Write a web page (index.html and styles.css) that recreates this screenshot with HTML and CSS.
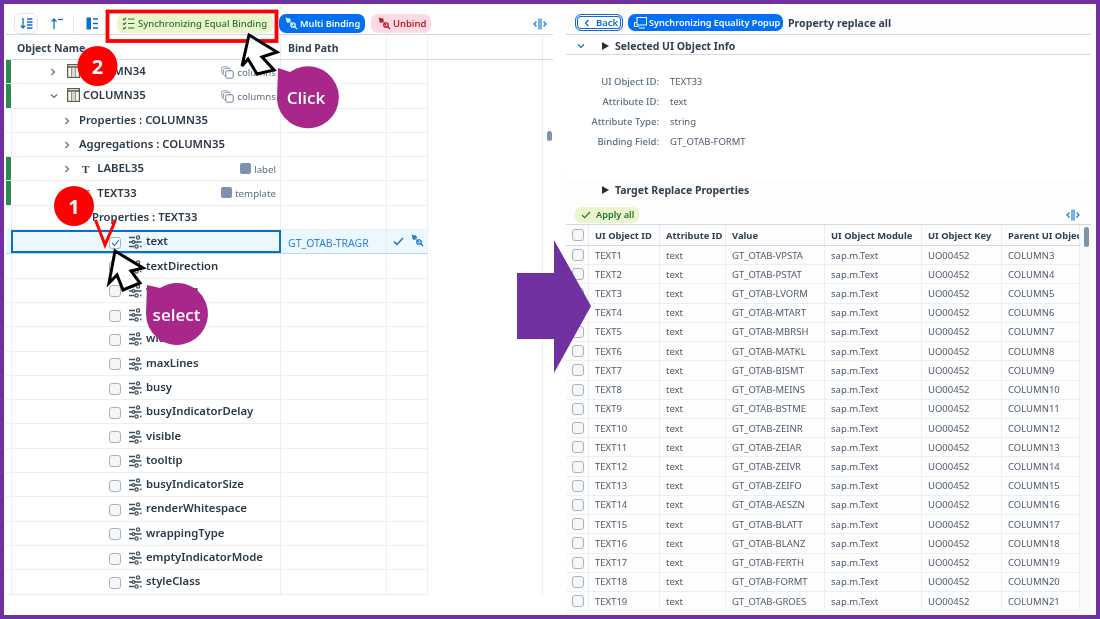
FILE: index.html
```html
<!DOCTYPE html>
<html>
<head lang="en">
    <meta charset="UTF-8">
    <title>Synchronizing Equal Binding</title>
    <link rel="stylesheet" href="styles.css">
</head>
<body>
<svg class="defs" width="0" height="0">
    <symbol id="i-param" viewBox="0 0 14 14">
        <g fill="none" stroke="#3f4f60" stroke-width="1.3">
            <path d="M1 2.5h6M1 7h3M1 11.5h5"/>
            <path d="M7 7h6.5M12 11.5h1.5"/>
            <circle cx="10" cy="2.5" r="1.6"/>
            <circle cx="5.5" cy="7" r="1.4"/>
            <circle cx="8.5" cy="11.5" r="1.6"/>
        </g>
    </symbol>
    <symbol id="i-column" viewBox="0 0 13 14">
        <rect x=".6" y=".6" width="11.8" height="12.8" fill="#fff4dc" stroke="#5a5a5a" stroke-width="1.2"/>
        <path d="M.6 3h11.8" stroke="#5a5a5a" stroke-width="1.6"/>
        <path d="M4.6 3v10M8.4 3v10" stroke="#8b8b8b"/>
        <rect x="5" y="3.8" width="3" height="9" fill="#cfd6de"/>
    </symbol>
    <symbol id="i-copy" viewBox="0 0 13 13">
        <g fill="#fff" stroke="#8fa0b3" stroke-width="1">
            <rect x=".8" y=".8" width="7" height="7" rx="1"/>
            <rect x="2.6" y="2.6" width="7" height="7" rx="1"/>
            <rect x="4.8" y="4.8" width="7.4" height="7.4" rx="1.4" stroke="#6f8196"/>
        </g>
    </symbol>
    <symbol id="i-link" viewBox="0 0 14 14">
        <g fill="none" stroke="currentColor" stroke-width="1.3">
            <path d="M1 1l3 3M6 6l3 3M2.5 5L5 2.5"/>
            <circle cx="3.8" cy="3.8" r="1.8"/>
            <circle cx="8.6" cy="8.6" r="2.4"/>
            <path d="M10.4 10.4L13 13"/>
        </g>
    </symbol>
    <symbol id="i-split" viewBox="0 0 14 12">
        <g fill="none" stroke="#0a6ed1" stroke-width="1.1">
            <path d="M6 .5v11M8 .5v11"/>
            <path d="M3.5 3.5L1 6l2.5 2.5M10.5 3.5L13 6l-2.5 2.5"/>
        </g>
    </symbol>
    <symbol id="i-right" viewBox="0 0 6 8">
        <path d="M1.5 1l3 3-3 3" fill="none" stroke="#556b82" stroke-width="1.1"/>
    </symbol>
    <symbol id="i-down" viewBox="0 0 8 6">
        <path d="M1 1.5l3 3 3-3" fill="none" stroke="#556b82" stroke-width="1.1"/>
    </symbol>
</svg>

<div class="frame">
    <div class="pane-left">
        <div class="tools">
            <span class="tool-box">
                <svg width="13" height="13" viewBox="0 0 13 13"><g fill="none" stroke="#0a6ed1" stroke-width="1.3"><path d="M3 1v10M.8 8.6L3 11l2.2-2.4"/><path d="M7 2h5.5M7 5h5.5M7 8h5.5M7 11h5.5"/></g></svg>
            </span>
            <svg class="tool-up" width="14" height="13" viewBox="0 0 14 13"><g fill="none" stroke="#0a6ed1" stroke-width="1.3"><path d="M4 12V2M1.5 4.6L4 2l2.5 2.6"/><path d="M8 2.5h5"/></g></svg>
            <span class="tool-sep"></span>
            <svg class="tool-tree" width="12" height="13" viewBox="0 0 12 13"><rect x=".5" y=".5" width="4.5" height="12" fill="#0a6ed1"/><path d="M7 2h5M7 6.5h5M7 11h5" stroke="#0a6ed1" stroke-width="1.4"/></svg>
            <span class="btn btn-green">
                <svg width="13" height="13" viewBox="0 0 13 13"><g fill="none" stroke="#256f3a" stroke-width="1.1"><path d="M1 2l1 1 2-2M1 6.5l1 1 2-2M1 11l1 1 2-2"/><path d="M6 2h6.5M6 6.5h6.5M6 11h6.5"/></g></svg>
                Synchronizing Equal Binding
            </span>
            <span class="btn btn-blue"><svg width="13" height="13"><use href="#i-link"/></svg>Multi Binding</span>
            <span class="btn btn-pink"><svg width="13" height="13"><use href="#i-link"/></svg>Unbind</span>
            <svg class="tool-split" width="14" height="12"><use href="#i-split"/></svg>
        </div>

        <div class="tree-head">
            <div class="head-cell head-name">Object Name</div>
            <div class="head-cell head-path">Bind Path</div>
            <div class="head-cell head-act"></div>
            <div class="head-cell head-fill"></div>
        </div>

        <div class="tree-body">
            <div class="rows">
                <div class="row mark"><div class="cell-name lv1"><svg class="chev" width="6" height="8"><use href="#i-right"/></svg><svg class="obj" width="13" height="14"><use href="#i-column"/></svg><b>COLUMN34</b><span class="tag"><svg width="13" height="13"><use href="#i-copy"/></svg>columns</span></div><div></div><div></div></div>
                <div class="row mark"><div class="cell-name lv1"><svg class="chev chev-d" width="8" height="6"><use href="#i-down"/></svg><svg class="obj" width="13" height="14"><use href="#i-column"/></svg><b>COLUMN35</b><span class="tag"><svg width="13" height="13"><use href="#i-copy"/></svg>columns</span></div><div></div><div></div></div>
                <div class="row"><div class="cell-name lv2"><svg class="chev" width="6" height="8"><use href="#i-right"/></svg><b>Properties : COLUMN35</b></div><div></div><div></div></div>
                <div class="row"><div class="cell-name lv2"><svg class="chev" width="6" height="8"><use href="#i-right"/></svg><b>Aggregations : COLUMN35</b></div><div></div><div></div></div>
                <div class="row mark"><div class="cell-name lv2"><svg class="chev" width="6" height="8"><use href="#i-right"/></svg><span class="obj-t">T</span><b>LABEL35</b><span class="tag"><i class="sq"></i>label</span></div><div></div><div></div></div>
                <div class="row mark"><div class="cell-name lv2"><svg class="chev" width="6" height="8"><use href="#i-right"/></svg><span class="obj-t">T</span><b>TEXT33</b><span class="tag"><i class="sq"></i>template</span></div><div></div><div></div></div>
                <div class="row"><div class="cell-name lv3"><svg class="chev" width="6" height="8"><use href="#i-right"/></svg><b>Properties : TEXT33</b></div><div></div><div></div></div>
                <div class="row row-on">
                    <div class="cell-name lv4"><span class="check check-on"><svg width="9" height="8" viewBox="0 0 9 8"><path d="M1 4l2.5 2.5L8 1" fill="none" stroke="#0a6ed1" stroke-width="1.1"/></svg></span><svg class="param" width="14" height="14"><use href="#i-param"/></svg><b>text</b></div>
                    <div class="cell-path">GT_OTAB-TRAGR</div>
                    <div class="cell-act"><svg width="11" height="9" viewBox="0 0 11 9"><path d="M1 4.5L4 7.5 10 1" fill="none" stroke="#0a6ed1" stroke-width="1.3"/></svg><svg class="act-link" width="13" height="13"><use href="#i-link"/></svg></div>
                </div>
                <div class="row"><div class="cell-name lv4"><span class="check"></span><svg class="param" width="14" height="14"><use href="#i-param"/></svg><b>textDirection</b></div><div></div><div></div></div>
                <div class="row"><div class="cell-name lv4"><span class="check"></span><svg class="param" width="14" height="14"><use href="#i-param"/></svg><b>wrapping</b></div><div></div><div></div></div>
                <div class="row"><div class="cell-name lv4"><span class="check"></span><svg class="param" width="14" height="14"><use href="#i-param"/></svg><b>textAlign</b></div><div></div><div></div></div>
                <div class="row"><div class="cell-name lv4"><span class="check"></span><svg class="param" width="14" height="14"><use href="#i-param"/></svg><b>width</b></div><div></div><div></div></div>
                <div class="row"><div class="cell-name lv4"><span class="check"></span><svg class="param" width="14" height="14"><use href="#i-param"/></svg><b>maxLines</b></div><div></div><div></div></div>
                <div class="row"><div class="cell-name lv4"><span class="check"></span><svg class="param" width="14" height="14"><use href="#i-param"/></svg><b>busy</b></div><div></div><div></div></div>
                <div class="row"><div class="cell-name lv4"><span class="check"></span><svg class="param" width="14" height="14"><use href="#i-param"/></svg><b>busyIndicatorDelay</b></div><div></div><div></div></div>
                <div class="row"><div class="cell-name lv4"><span class="check"></span><svg class="param" width="14" height="14"><use href="#i-param"/></svg><b>visible</b></div><div></div><div></div></div>
                <div class="row"><div class="cell-name lv4"><span class="check"></span><svg class="param" width="14" height="14"><use href="#i-param"/></svg><b>tooltip</b></div><div></div><div></div></div>
                <div class="row"><div class="cell-name lv4"><span class="check"></span><svg class="param" width="14" height="14"><use href="#i-param"/></svg><b>busyIndicatorSize</b></div><div></div><div></div></div>
                <div class="row"><div class="cell-name lv4"><span class="check"></span><svg class="param" width="14" height="14"><use href="#i-param"/></svg><b>renderWhitespace</b></div><div></div><div></div></div>
                <div class="row"><div class="cell-name lv4"><span class="check"></span><svg class="param" width="14" height="14"><use href="#i-param"/></svg><b>wrappingType</b></div><div></div><div></div></div>
                <div class="row"><div class="cell-name lv4"><span class="check"></span><svg class="param" width="14" height="14"><use href="#i-param"/></svg><b>emptyIndicatorMode</b></div><div></div><div></div></div>
                <div class="row"><div class="cell-name lv4"><span class="check"></span><svg class="param" width="14" height="14"><use href="#i-param"/></svg><b>styleClass</b></div><div></div><div></div></div>
            </div>
            <div class="tree-fill"></div>
            <div class="tree-scroll"><span class="thumb"></span></div>
        </div>
    </div>

    <div class="pane-right">
        <div class="tools-right">
            <span class="btn-back"><svg width="6" height="8" viewBox="0 0 6 8"><path d="M4.5 1l-3 3 3 3" fill="none" stroke="#0a6ed1" stroke-width="1.3"/></svg>Back</span>
            <span class="btn btn-blue btn-popup">
                <svg width="13" height="12" viewBox="0 0 13 12"><g fill="none" stroke="#fff" stroke-width="1"><rect x="3" y=".5" width="9.5" height="7.5"/><path d="M3 5.5H.5v4H5M5 11h6"/></g></svg>
                Synchronizing Equality Popup
            </span>
            <b class="title">Property replace all</b>
        </div>

        <div class="panel">
            <div class="panel-head">
                <svg class="panel-chev" width="8" height="6" viewBox="0 0 8 6"><path d="M1 1.5l3 3 3-3" fill="none" stroke="#0a6ed1" stroke-width="1.2"/></svg>
                <i class="tri"></i><b>Selected UI Object Info</b>
            </div>
            <div class="info">
                <span class="info-l">UI Object ID:</span><span>TEXT33</span>
                <span class="info-l">Attribute ID:</span><span>text</span>
                <span class="info-l">Attribute Type:</span><span>string</span>
                <span class="info-l">Binding Field:</span><span>GT_OTAB-FORMT</span>
            </div>
        </div>

        <div class="target-head"><i class="tri"></i><b>Target Replace Properties</b></div>
        <div class="apply-bar">
            <span class="btn-apply"><svg width="10" height="8" viewBox="0 0 10 8"><path d="M1 4l2.6 2.6L9 1" fill="none" stroke="#256f3a" stroke-width="1.1"/></svg>Apply all</span>
            <svg width="14" height="12"><use href="#i-split"/></svg>
        </div>

        <div class="grid">
            <div class="grid-main">
                <div class="gr gr-head"><span class="cb-cell"><i class="check"></i></span><span>UI Object ID</span><span>Attribute ID</span><span>Value</span><span>UI Object Module</span><span>UI Object Key</span><span class="clip">Parent UI Object</span></div>
                <div class="gr"><span class="cb-cell"><i class="check"></i></span><span>TEXT1</span><span>text</span><span>GT_OTAB-VPSTA</span><span>sap.m.Text</span><span>UO00452</span><span>COLUMN3</span></div>
                <div class="gr"><span class="cb-cell"><i class="check"></i></span><span>TEXT2</span><span>text</span><span>GT_OTAB-PSTAT</span><span>sap.m.Text</span><span>UO00452</span><span>COLUMN4</span></div>
                <div class="gr"><span class="cb-cell"><i class="check"></i></span><span>TEXT3</span><span>text</span><span>GT_OTAB-LVORM</span><span>sap.m.Text</span><span>UO00452</span><span>COLUMN5</span></div>
                <div class="gr"><span class="cb-cell"><i class="check"></i></span><span>TEXT4</span><span>text</span><span>GT_OTAB-MTART</span><span>sap.m.Text</span><span>UO00452</span><span>COLUMN6</span></div>
                <div class="gr"><span class="cb-cell"><i class="check"></i></span><span>TEXT5</span><span>text</span><span>GT_OTAB-MBRSH</span><span>sap.m.Text</span><span>UO00452</span><span>COLUMN7</span></div>
                <div class="gr"><span class="cb-cell"><i class="check"></i></span><span>TEXT6</span><span>text</span><span>GT_OTAB-MATKL</span><span>sap.m.Text</span><span>UO00452</span><span>COLUMN8</span></div>
                <div class="gr"><span class="cb-cell"><i class="check"></i></span><span>TEXT7</span><span>text</span><span>GT_OTAB-BISMT</span><span>sap.m.Text</span><span>UO00452</span><span>COLUMN9</span></div>
                <div class="gr"><span class="cb-cell"><i class="check"></i></span><span>TEXT8</span><span>text</span><span>GT_OTAB-MEINS</span><span>sap.m.Text</span><span>UO00452</span><span>COLUMN10</span></div>
                <div class="gr"><span class="cb-cell"><i class="check"></i></span><span>TEXT9</span><span>text</span><span>GT_OTAB-BSTME</span><span>sap.m.Text</span><span>UO00452</span><span>COLUMN11</span></div>
                <div class="gr"><span class="cb-cell"><i class="check"></i></span><span>TEXT10</span><span>text</span><span>GT_OTAB-ZEINR</span><span>sap.m.Text</span><span>UO00452</span><span>COLUMN12</span></div>
                <div class="gr"><span class="cb-cell"><i class="check"></i></span><span>TEXT11</span><span>text</span><span>GT_OTAB-ZEIAR</span><span>sap.m.Text</span><span>UO00452</span><span>COLUMN13</span></div>
                <div class="gr"><span class="cb-cell"><i class="check"></i></span><span>TEXT12</span><span>text</span><span>GT_OTAB-ZEIVR</span><span>sap.m.Text</span><span>UO00452</span><span>COLUMN14</span></div>
                <div class="gr"><span class="cb-cell"><i class="check"></i></span><span>TEXT13</span><span>text</span><span>GT_OTAB-ZEIFO</span><span>sap.m.Text</span><span>UO00452</span><span>COLUMN15</span></div>
                <div class="gr"><span class="cb-cell"><i class="check"></i></span><span>TEXT14</span><span>text</span><span>GT_OTAB-AESZN</span><span>sap.m.Text</span><span>UO00452</span><span>COLUMN16</span></div>
                <div class="gr"><span class="cb-cell"><i class="check"></i></span><span>TEXT15</span><span>text</span><span>GT_OTAB-BLATT</span><span>sap.m.Text</span><span>UO00452</span><span>COLUMN17</span></div>
                <div class="gr"><span class="cb-cell"><i class="check"></i></span><span>TEXT16</span><span>text</span><span>GT_OTAB-BLANZ</span><span>sap.m.Text</span><span>UO00452</span><span>COLUMN18</span></div>
                <div class="gr"><span class="cb-cell"><i class="check"></i></span><span>TEXT17</span><span>text</span><span>GT_OTAB-FERTH</span><span>sap.m.Text</span><span>UO00452</span><span>COLUMN19</span></div>
                <div class="gr"><span class="cb-cell"><i class="check"></i></span><span>TEXT18</span><span>text</span><span>GT_OTAB-FORMT</span><span>sap.m.Text</span><span>UO00452</span><span>COLUMN20</span></div>
                <div class="gr"><span class="cb-cell"><i class="check"></i></span><span>TEXT19</span><span>text</span><span>GT_OTAB-GROES</span><span>sap.m.Text</span><span>UO00452</span><span>COLUMN21</span></div>
            </div>
            <div class="grid-scroll"><span class="grid-thumb"></span></div>
        </div>
    </div>

    <!-- annotations over the screenshot -->
    <svg class="overlay" width="1100" height="619" viewBox="0 0 1100 619">
        <polygon points="517,273 554,273 554,240 591,306 554,373 554,339 517,339" fill="#7030a0"/>
        <rect x="107.5" y="11.5" width="169" height="29.5" fill="none" stroke="#f00" stroke-width="3.8"/>
        <path d="M95.5 220l9.5 25 10.5-25" fill="none" stroke="#f00" stroke-width="3"/>
        <circle cx="97.5" cy="66" r="20" fill="#f00"/>
        <circle cx="74" cy="206" r="20" fill="#f00"/>
        <path d="M278 68l12 4a31 31 0 1 1-13 28z" fill="#a9278a"/>
        <path d="M147 285l13 3a31 31 0 1 1-14 26z" fill="#a9278a"/>
        <polygon points="249,35 277,52 262,57 274,70 257,74 248,59 242,66" fill="#fff" stroke="#000" stroke-width="3"/>
        <polygon points="115,251 143,268 131,271 140,283 123,290 117,275 109,283" fill="#fff" stroke="#000" stroke-width="3"/>
    </svg>
    <span class="note-num num-2">2</span>
    <span class="note-num num-1">1</span>
    <span class="note-txt txt-click">Click</span>
    <span class="note-txt txt-select">select</span>
</div>
</body>
</html>
```

FILE: styles.css
```css
* {
    margin: 0;
    padding: 0;
    box-sizing: border-box;
}

body {
    font-family: "Noto Sans", "Liberation Sans", sans-serif;
    font-size: 10px;
    color: #32404f;
    background: #fff;
}

.defs {
    position: absolute;
}

.frame {
    position: relative;
    width: 1100px;
    height: 619px;
    border: 4px solid #7030a0;
    display: flex;
    overflow: hidden;
    background: #fff;
    filter: blur(.3px);
}

.pane-left {
    width: 547px;
    margin-left: 2px;
    flex: none;
}

/* left toolbar */
.tools {
    height: 31px;
    display: flex;
    align-items: center;
    border-bottom: 1px solid #d3d9de;
    padding: 9px 0 0 8px;
}

.tool-box {
    width: 24px;
    height: 21px;
    border: 1px solid #e3e6e9;
    border-radius: 6px;
    display: flex;
    align-items: center;
    justify-content: center;
}

.tool-up {
    margin-left: 12px;
}

.tool-sep {
    width: 1px;
    height: 18px;
    background: #e3e6e9;
    margin-left: 9px;
}

.tool-tree {
    margin-left: 12px;
}

.btn {
    height: 19px;
    border-radius: 7px;
    display: flex;
    align-items: center;
    font-size: 9.5px;
    font-weight: 500;
    white-space: nowrap;
}

.btn-green {
    width: 156px;
    margin-left: 19px;
    padding-left: 5px;
    gap: 3px;
    background: #ebf5cb;
    color: #256f3a;
}

.btn-blue {
    width: 86px;
    margin-left: 6px;
    padding-left: 6px;
    gap: 2px;
    background: #0070f2;
    color: #fff;
    font-size: 9.2px;
    font-weight: 600;
}

.btn-pink {
    width: 60px;
    margin-left: 6px;
    padding-left: 7px;
    gap: 2px;
    background: #ffd9e6;
    color: #aa0808;
}

.tool-split {
    margin-left: 102px;
}

/* left tree */
.tree-head {
    height: 25px;
    display: flex;
    border-bottom: 1px solid #d3d9de;
    font-size: 10.5px;
    font-weight: 700;
}

.head-cell {
    border-right: 1px solid #eceef0;
    display: flex;
    align-items: center;
    padding-top: 1px;
}

.head-name {
    width: 275px;
    padding-left: 11px;
}

.head-path {
    width: 106px;
    padding-left: 7px;
}

.head-act {
    width: 41px;
}

.head-fill {
    width: 115px;
}

.tree-body {
    display: flex;
}

.rows {
    width: 422px;
    flex: none;
}

.row {
    height: 24.3px;
    display: grid;
    grid-template-columns: 275px 106px 41px;
    border-bottom: 1px solid #eceef0;
}

.row > div {
    border-right: 1px solid #eceef0;
}

.cell-name {
    position: relative;
    display: flex;
    align-items: center;
    border-left: 5px solid transparent;
    box-shadow: inset 1px 0 0 #eceef0;
    font-size: 11.3px;
    padding-bottom: 2px;
}

.mark .cell-name {
    border-left-color: #2b8a4c;
    box-shadow: none;
}

.cell-name b {
    white-space: nowrap;
    font-weight: 600;
    color: #2b3846;
}

.lv1 {
    padding-left: 39px;
}

.lv1 .chev {
    margin-right: 11px;
}

.lv1 .chev-d {
    margin-right: 9px;
}

.lv1 .obj {
    margin-right: 3px;
}

.lv2 {
    padding-left: 53px;
}

.lv2 .chev {
    margin-right: 9px;
}

.lv3 {
    padding-left: 67px;
}

.lv3 .chev {
    margin-right: 8px;
}

.lv4 {
    padding-left: 98px;
}

.chev {
    flex: none;
    margin-top: 3px;
}

.obj-t {
    font-family: "Liberation Serif", serif;
    font-weight: 700;
    font-size: 11px;
    margin: 2px 8px 0 3px;
}

.tag {
    position: absolute;
    right: 4px;
    top: 6px;
    display: flex;
    align-items: center;
    gap: 3px;
    font-size: 9.7px;
    color: #5b6d80;
    font-weight: 400;
}

.sq {
    width: 11px;
    height: 11px;
    border-radius: 2px;
    background: #7f92ab;
    margin-top: -3px;
}

.check {
    width: 12px;
    height: 12px;
    border: 1px solid #a6b3c0;
    border-radius: 3px;
    background: #f5f6f7;
    flex: none;
    display: flex;
    align-items: center;
    justify-content: center;
}

.lv4 .check {
    margin-top: 4px;
}

.check-on {
    background: #fff;
}

.param {
    margin: 3px 4px 0 7px;
    flex: none;
}

.row-on {
    background: #ebf8ff;
    border-bottom-color: #b5d8f7;
}

.row-on .cell-name {
    border: 2px solid #0a6ed1;
    box-shadow: none;
    margin-left: 5px;
    padding-left: 96px;
    padding-bottom: 2px;
}

.cell-path {
    color: #2f7fe0;
    font-size: 10.5px;
    padding: 6px 0 0 7px;
}

.cell-act {
    display: flex;
    align-items: center;
    padding-left: 6px;
    gap: 7px;
    color: #0a6ed1;
}

.act-link {
    margin-top: -3px;
}

.tree-fill {
    width: 115px;
    border-right: 1px solid #eceef0;
}

.tree-scroll {
    width: 10px;
    padding: 71px 0 0 4px;
}

.thumb {
    display: block;
    width: 5px;
    height: 10px;
    border-radius: 3px;
    background: #7f92ab;
}

/* right pane */
.pane-right {
    width: 525px;
    margin-left: 13px;
    flex: none;
    background: #fdfdfe;
}

.tools-right {
    height: 31px;
    display: flex;
    align-items: center;
    gap: 5px;
    padding: 7px 0 0 9px;
    border-bottom: 1px solid #d3d9de;
}

.btn-back {
    width: 48px;
    height: 17px;
    border: 1px solid #0a6ed1;
    border-radius: 6px;
    box-shadow: inset 0 0 0 1px #fff, inset 0 0 0 2px #0a6ed1;
    display: flex;
    align-items: center;
    gap: 6px;
    padding-left: 8px;
    font-size: 9.5px;
    font-weight: 600;
    color: #0a6ed1;
    background: #fff;
}

.btn-popup {
    width: 155px;
    height: 17px;
    margin-left: 0;
    padding-left: 6px;
    gap: 2px;
    font-size: 9.1px;
}

.title {
    font-size: 10.6px;
    white-space: nowrap;
    font-weight: 700;
}

.panel {
    height: 145px;
    background: #fff;
    border-radius: 0 0 8px 8px;
}

.panel-head {
    height: 20px;
    display: flex;
    align-items: center;
    padding-left: 11px;
    padding-top: 2px;
    border-bottom: 1px solid #d3d9de;
    font-size: 10.5px;
}

.panel-chev {
    margin-right: 17px;
}

.tri {
    width: 0;
    height: 0;
    border-left: 7px solid #22303e;
    border-top: 4px solid transparent;
    border-bottom: 4px solid transparent;
    margin-right: 6px;
}

.info {
    display: grid;
    grid-template-columns: 93px 1fr;
    column-gap: 11px;
    grid-auto-rows: 20px;
    padding-top: 16px;
    align-items: center;
    font-size: 9.5px;
    color: #4d5b6b;
}

.info-l {
    text-align: right;
    font-weight: 500;
    color: #5b6d80;
}

.target-head {
    height: 25px;
    padding: 0 0 6px 36px;
    display: flex;
    align-items: center;
    font-size: 10.5px;
}

.apply-bar {
    height: 19px;
    display: flex;
    align-items: center;
    justify-content: space-between;
    padding: 0 11px 0 9px;
}

.btn-apply {
    width: 64px;
    height: 16px;
    border-radius: 6px;
    background: #ebf5cb;
    color: #256f3a;
    font-size: 9.2px;
    font-weight: 600;
    display: flex;
    align-items: center;
    gap: 5px;
    padding-left: 6px;
}

.grid {
    display: flex;
    border-top: 1px solid #d3d9de;
}

.grid-main {
    width: 514px;
    flex: none;
    overflow: hidden;
}

.gr {
    height: 19.22px;
    display: grid;
    grid-template-columns: 23px 71px 66px 99px 97px 80px 78px;
    align-items: center;
    border-bottom: 1px solid #eceef0;
    font-size: 9.5px;
    color: #4d5b6b;
}

.gr > span {
    height: 100%;
    display: flex;
    align-items: center;
    padding-left: 6px;
    white-space: nowrap;
    overflow: hidden;
    border-right: 1px solid #eceef0;
}

.gr-head {
    height: 21px;
    font-size: 9.4px;
    font-weight: 700;
    color: #32404f;
    border-bottom: 1px solid #d3d9de;
}

.grid-scroll {
    width: 11px;
    background: #fafafa;
    padding: 2px 0 0 4px;
}

.grid-thumb {
    display: block;
    width: 5px;
    height: 20px;
    border-radius: 3px;
    background: #7f92ab;
}

/* annotations */
.overlay {
    position: absolute;
    left: -4px;
    top: -4px;
}

.note-num {
    position: absolute;
    color: #fff;
    font: 700 20px "Open Sans", sans-serif;
    transform: translate(-50%, -50%);
}

.num-2 {
    left: 93.5px;
    top: 62px;
}

.num-1 {
    left: 70px;
    top: 202px;
}

.note-txt {
    position: absolute;
    color: #fff;
    font: 600 17px "Open Sans", sans-serif;
    transform: translate(-50%, -50%);
}

.txt-click {
    left: 302px;
    top: 93px;
}

.txt-select {
    left: 172.5px;
    top: 310px;
}
```
